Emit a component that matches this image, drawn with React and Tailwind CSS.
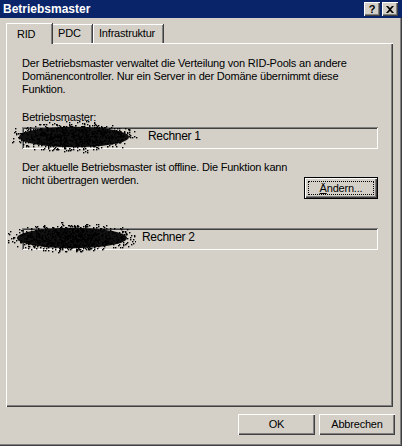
import React from "react";

const raised =
  "shadow-[inset_1px_1px_0_#ffffff,inset_-1px_-1px_0_#404040,inset_-2px_-2px_0_#808080]";
const sunken =
  "shadow-[inset_1px_1px_0_#808080,inset_-1px_-1px_0_#ffffff,inset_2px_2px_0_#404040,inset_-2px_-2px_0_#d4d0c8]";

function Scribble({ width, height, seed }) {
  // dithered black smear hiding the computer name
  const dots = [];
  let s = seed;
  const rnd = () => {
    s = (s * 9301 + 49297) % 233280;
    return s / 233280;
  };
  const cx = width / 2;
  const cy = height / 2;
  for (let i = 0; i < 1800; i++) {
    const x = rnd() * width;
    const y = rnd() * height;
    const dx = (x - cx) / cx;
    const dy = (y - cy) / cy;
    const d = dx * dx + dy * dy * 1.3;
    if (rnd() > d * 0.85) dots.push([Math.floor(x), Math.floor(y)]);
  }
  return (
    <svg width={width} height={height} className="block">
      <ellipse cx={cx} cy={cy} rx={cx * 0.86} ry={cy * 0.6} fill="#111" />
      {dots.map(([x, y], i) => (
        <rect key={i} x={x} y={y} width="1.4" height="1.4" fill="#000" />
      ))}
    </svg>
  );
}

function Field({ label, seed, blobLeft, textLeft }) {
  return (
    <div className={`relative h-[22px] w-[356px] bg-[#d4d0c8] ${sunken}`}>
      <div className="absolute top-[-7px]" style={{ left: blobLeft }}>
        <Scribble width={128} height={34} seed={seed} />
      </div>
      <span
        className="absolute top-[3px] text-[12px] tracking-[-0.3px] text-black"
        style={{ left: textLeft }}
      >
        {label}
      </span>
    </div>
  );
}

export default function App() {
  return (
    <div
      className="w-[402px] h-[446px] bg-[#d4d0c8] flex flex-col text-[11px] leading-[13px] tracking-[-0.2px] text-black shadow-[inset_-1px_-1px_0_#404040,inset_-2px_-2px_0_#808080,inset_1px_0_0_#d4d0c8]"
      style={{ fontFamily: '"Liberation Sans", Arial, sans-serif' }}
    >
      <div className="h-[18px] bg-[#0a246a] flex items-center justify-between pl-[3px] pr-[4px]">
        <span className="text-white font-bold text-[12px] tracking-[0px]">Betriebsmaster</span>
        <div className="flex gap-[2px]">
          <div className={`w-[16px] h-[14px] bg-[#d4d0c8] ${raised} flex items-center justify-center font-bold text-[11px]`}>?</div>
          <div className={`w-[16px] h-[14px] bg-[#d4d0c8] ${raised} flex items-center justify-center`}>
            <svg width="8" height="7" viewBox="0 0 8 7">
              <path d="M0 0h2l2 2 2-2h2L5 3.5 8 7H6L4 5 2 7H0l3-3.5z" fill="#000" />
            </svg>
          </div>
        </div>
      </div>

      <div className="flex items-end pl-[6px] mt-[4px] h-[21px]">
        <div className="relative z-10 h-[21px] w-[46px] bg-[#d4d0c8] border-l border-t border-white shadow-[inset_-1px_0_0_#808080,1px_0_0_#404040] pl-[10px] pt-[4px] mb-[-1px]">RID</div>
        <div className="h-[19px] w-[40px] border-t border-white shadow-[inset_-1px_0_0_#808080,1px_0_0_#404040] pl-[6px] pt-[2px]">PDC</div>
        <div className="h-[19px] w-[70px] ml-[1px] border-l border-t border-white shadow-[inset_-1px_0_0_#808080,1px_0_0_#404040] pl-[5px] pt-[2px]">Infrastruktur</div>
      </div>

      <div className="ml-[6px] w-[387px] h-[364px] bg-[#d4d0c8] shadow-[inset_1px_1px_0_#ffffff,inset_-1px_-1px_0_#404040,inset_-2px_-2px_0_#808080] pl-[16px] pt-[14px]">
        <p className="w-[340px]">
          Der Betriebsmaster verwaltet die Verteilung von RID-Pools an andere Domänencontroller. Nur ein Server in der Domäne übernimmt diese Funktion.
        </p>
        <p className="mt-[15px] mb-[3px]">Betriebsmaster:</p>
        <Field label="Rechner 1" seed={17} blobLeft={-12} textLeft={126} />
        <div className="flex mt-[12px] items-start">
          <p className="w-[278px]">
            Der aktuelle Betriebsmaster ist offline. Die Funktion kann nicht übertragen werden.
          </p>
          <div className="ml-[4px] mt-[16px] w-[74px] h-[22px] bg-[#d4d0c8] border border-black shadow-[inset_1px_1px_0_#ffffff,inset_-1px_-1px_0_#404040,inset_-2px_-2px_0_#808080] p-[3px]">
            <div className="h-full w-full border border-dotted border-black flex items-center justify-center">
              <span><span className="underline">Ä</span>ndern...</span>
            </div>
          </div>
        </div>
        <div className="mt-[29px]">
          <Field label="Rechner 2" seed={91} blobLeft={-14} textLeft={120} />
        </div>
      </div>

      <div className="flex justify-end gap-[4px] pr-[7px] mt-[7px]">
        <div className={`w-[77px] h-[21px] bg-[#d4d0c8] ${raised} flex items-center justify-center`}>OK</div>
        <div className={`w-[76px] h-[21px] bg-[#d4d0c8] ${raised} flex items-center justify-center`}>Abbrechen</div>
      </div>
    </div>
  );
}
